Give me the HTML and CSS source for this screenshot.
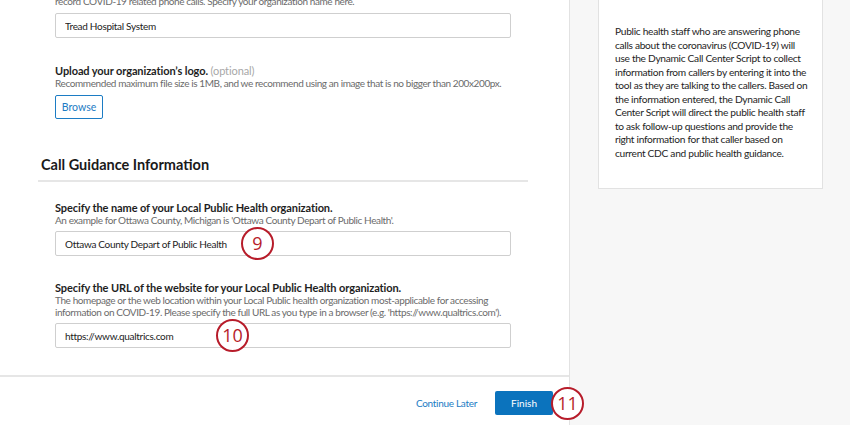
FILE: index.html
```html
<!DOCTYPE html>
<html lang="en">
<head>
    <meta charset="UTF-8">
    <meta name="viewport" content="width=device-width, initial-scale=1.0">
    <title>Dynamic Call Center Script Setup</title>
    <link rel="stylesheet" href="styles.css">
</head>
<body>
    <div class="page">
        <main class="main">
            <div class="content">
                <div class="field field-first">
                    <div class="helper">Staff will use the Dynamic Call Center Script to answer and<br>record COVID-19 related phone calls. Specify your organization name here.</div>
                    <input class="text-input" type="text" value="Tread Hospital System">
                </div>

                <div class="field field-logo">
                    <label class="label">Upload your organization’s logo. <span class="optional">(optional)</span></label>
                    <div class="helper">Recommended maximum file size is 1MB, and we recommend using an image that is no bigger than 200x200px.</div>
                    <button class="browse-btn" type="button">Browse</button>
                </div>

                <h2 class="section-title">Call Guidance Information</h2>

                <div class="field field-health">
                    <label class="label" for="healthName">Specify the name of your Local Public Health organization.</label>
                    <div class="helper">An example for Ottawa County, Michigan is 'Ottawa County Depart of Public Health'.</div>
                    <div class="input-wrap">
                        <input class="text-input" id="healthName" type="text" value="Ottawa County Depart of Public Health">
                        <span class="step step-9">9</span>
                    </div>
                </div>

                <div class="field field-url">
                    <label class="label" for="healthUrl">Specify the URL of the website for your Local Public Health organization.</label>
                    <div class="helper">The homepage or the web location within your Local Public health organization most-applicable for accessing<br>information on COVID-19. Please specify the full URL as you type in a browser (e.g. 'https://www.qualtrics.com').</div>
                    <div class="input-wrap">
                        <input class="text-input" id="healthUrl" type="text" value="https://www.qualtrics.com">
                        <span class="step step-10">10</span>
                    </div>
                </div>
            </div>

            <footer class="footer">
                <a class="later-link" href="#">Continue Later</a>
                <button class="finish-btn" type="button">Finish</button>
                <span class="step step-11">11</span>
            </footer>
        </main>

        <aside class="aside">
            <div class="info-card">
                Public health staff who are answering phone calls about the coronavirus (COVID-19) will use the Dynamic Call Center Script to collect information from callers by entering it into the tool as they are talking to the callers. Based on the information entered, the Dynamic Call Center Script will direct the public health staff to ask follow-up questions and provide the right information for that caller based on current CDC and public health guidance.
            </div>
        </aside>
    </div>
</body>
</html>
```

FILE: styles.css
```css
body {
    margin: 0;
    font-family: Lato, "Open Sans", Arial, sans-serif;
    font-size: 10px;
    color: #222;
    background: #f7f7f7;
    overflow: hidden;
}

.page {
    display: flex;
    height: 425px;
}

.main {
    width: 569px;
    background: #fff;
    border-right: 1px solid #e2e2e2;
    display: flex;
    flex-direction: column;
    position: relative;
}

.content {
    flex: 1;
    overflow: hidden;
}

.field {
    margin-left: 55px;
    width: 456px;
}

.field-first {
    margin-top: -17px;
}

.field-logo {
    margin-top: 26px;
}

.field-health {
    margin-top: 19px;
}

.field-url {
    margin-top: 25px;
}

.label {
    display: block;
    font-size: 11px;
    font-weight: bold;
    color: #1e1e1e;
    line-height: 13px;
    letter-spacing: -0.1px;
}

.optional {
    font-weight: normal;
    color: #a8a8a8;
}

.helper {
    color: #6b6b6b;
    line-height: 12px;
    letter-spacing: -0.4px;
    white-space: nowrap;
}

.input-wrap {
    position: relative;
}

.text-input {
    display: block;
    box-sizing: border-box;
    width: 456px;
    height: 25px;
    margin-top: 5px;
    padding: 0 9px;
    border: 1px solid #cfcfcf;
    border-radius: 2px;
    font-family: inherit;
    font-size: 10px;
    color: #222;
    letter-spacing: -0.3px;
}

.field-first .text-input,
.browse-btn {
    margin-top: 6px;
}

.browse-btn {
    display: block;
    width: 48px;
    height: 24px;
    padding: 0;
    background: #fff;
    border: 1px solid #1c7cc4;
    border-radius: 2px;
    color: #1c7cc4;
    font-family: inherit;
    font-size: 10.5px;
    cursor: pointer;
}

.section-title {
    margin: 37px 0 0 38px;
    width: 487px;
    padding: 0 0 6px 3px;
    border-bottom: 2px solid #e6e6e6;
    font-size: 14.5px;
    line-height: 18px;
    color: #1a1a1a;
}

.footer {
    height: 44px;
    padding-top: 4px;
    border-top: 2px solid #e6e6e6;
    display: flex;
    justify-content: flex-end;
    align-items: center;
    padding-right: 16px;
    position: relative;
}

.later-link {
    color: #1c7cc4;
    text-decoration: none;
    margin-right: 18px;
    letter-spacing: -0.3px;
}

.finish-btn {
    width: 58px;
    height: 24px;
    border: none;
    border-radius: 2px;
    background: #0b73bd;
    color: #fff;
    font-family: inherit;
    font-size: 10px;
    cursor: pointer;
}

/* numbered callouts drawn over the screenshot */
.step {
    position: absolute;
    box-sizing: border-box;
    width: 33px;
    height: 33px;
    border: 2.5px solid #b71c2a;
    border-radius: 50%;
    background: #fff;
    color: #b71c2a;
    font-size: 18px;
    line-height: 28px;
    text-align: center;
    font-family: "Open Sans", Arial, sans-serif;
}

.step-9 {
    left: 186px;
    top: -4px;
}

.step-10 {
    left: 161px;
    top: -4px;
}

.step-11 {
    right: -15px;
    top: 10px;
    z-index: 2;
}

.aside {
    flex: 1;
    padding-left: 28px;
}

.info-card {
    width: 195px;
    padding: 25px 12px 28px 16px;
    background: #fff;
    border: 1px solid #e2e2e2;
    border-top: none;
    font-size: 10.2px;
    line-height: 13.5px;
    color: #1e1e1e;
    letter-spacing: -0.3px;
}
```
